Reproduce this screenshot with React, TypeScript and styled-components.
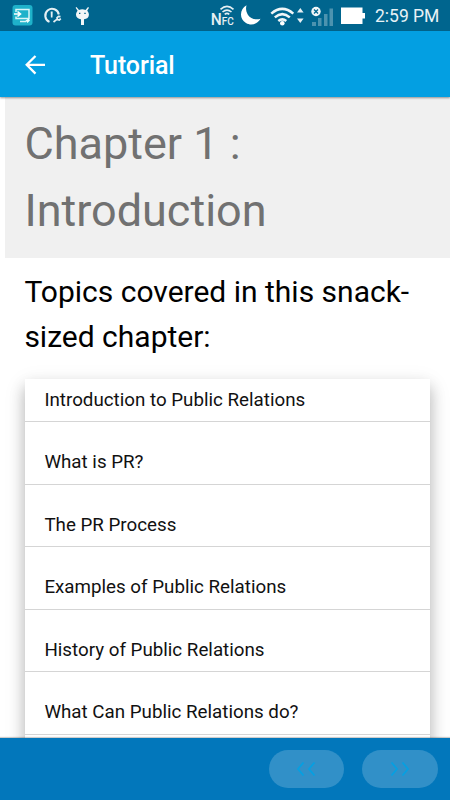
import React from 'react';
import styled, { createGlobalStyle } from 'styled-components';

const GlobalStyle = createGlobalStyle`
  *, *::before, *::after { box-sizing: border-box; }
  body { margin: 0; background: #fff; font-family: Roboto, "Liberation Sans", sans-serif; }
`;

const Screen = styled.div`
  width: 450px;
  height: 800px;
  display: flex;
  flex-direction: column;
  overflow: hidden;
  background: #fff;
`;

const StatusBar = styled.div`
  height: 31px;
  flex: none;
  display: flex;
  justify-content: space-between;
  background: #00658e;
  color: #fff;
`;

const StatusIcons = styled.svg`
  display: block;
  height: 31px;
  flex: none;
`;

const StatusRight = styled.div`
  display: flex;
  padding-right: 10px;
`;

const Clock = styled.span`
  width: 65px;
  font-size: 17.5px;
  line-height: 33px;
  white-space: nowrap;
  color: #e8f2f6;
`;

const AppBar = styled.header`
  position: relative;
  z-index: 1;
  height: 66px;
  flex: none;
  display: flex;
  align-items: center;
  padding: 3px 25px 0;
  background: #039fe2;
  color: #fff;
  box-shadow: 0 1px 2px rgba(0, 0, 0, 0.4);
`;

const BackIcon = styled.svg`
  width: 20px;
  height: 20px;
  margin: -2px 45px 0 0;
`;

const Title = styled.h1`
  margin: 0;
  font-size: 25px;
  font-weight: 500;
  line-height: 34px;
  letter-spacing: -0.1px;
`;

const Content = styled.main`
  flex: 1;
  min-height: 0;
  overflow: hidden;
`;

const ChapterHeading = styled.h2`
  height: 161px;
  margin: 0 0 0 5px;
  padding: 13px 19.4px 0;
  background: #f0f0f0;
  color: #717171;
  font-size: 45px;
  font-weight: 400;
  line-height: 67px;
`;

const Lead = styled.p`
  margin: 0;
  padding: 11px 24.4px 1px;
  font-size: 30px;
  line-height: 45px;
  color: #000;
`;

const TopicList = styled.ul`
  margin: 19px 20px 0 25px;
  padding: 0 0 20px;
  list-style: none;
  background: #fff;
  box-shadow: 0 8px 14px rgba(0, 0, 0, 0.24), 0 6px 22px rgba(0, 0, 0, 0.1);
`;

const Topic = styled.li`
  height: 62.5px;
  padding: 25.4px 19.4px 0;
  border-bottom: 1px solid #d5d5d5;
  font-size: 18.75px;
  line-height: 30px;
  color: #111;

  &:first-child {
    height: 43px;
    padding-top: 6px;
  }
`;

const Footer = styled.footer`
  position: relative;
  z-index: 1;
  height: 62px;
  flex: none;
  display: flex;
  align-items: center;
  justify-content: flex-end;
  gap: 18px;
  padding-right: 12.5px;
  background: #0277bb;
  box-shadow: 0 -1px 1px rgba(0, 0, 0, 0.2);
`;

const PageButton = styled.button`
  width: 75.5px;
  height: 38px;
  padding: 0;
  border: 0;
  border-radius: 19px;
  background: #3190c8;
  display: flex;
  align-items: center;
  justify-content: center;
`;

const Chevrons = styled.svg<{ $flip?: boolean }>`
  width: 20px;
  height: 16px;
  transform: ${({ $flip }) => ($flip ? 'scaleX(-1)' : 'none')};
`;

const topics = [
  'Introduction to Public Relations',
  'What is PR?',
  'The PR Process',
  'Examples of Public Relations',
  'History of Public Relations',
  'What Can Public Relations do?',
];

const NotificationIcons = () => (
  <StatusIcons width="100" viewBox="0 0 100 31">
    <rect x="12.5" y="5" width="20" height="20.5" rx="3" fill="#1fb2ca" />
    <path d="M16 12V9.500h13v9H16v-2M20 21.500h6" fill="none" stroke="#d9f5f8" strokeWidth="1.500" />
    <path d="M14 14h6M17.500 11.500l3 2.500-3 2.500" fill="none" stroke="#fff" strokeWidth="1.600" />
    <path d="M25.500 20.500l3-2 1.500 2-2.500 2.500z" fill="#e9ffff" />
    <path d="M49.500 21.900A6.800 6.800 0 1 1 58.800 14.500" fill="none" stroke="#e5eff3" strokeWidth="2.100" />
    <path d="M50.700 11.500h2l-.2 6h-1.600z" fill="#e5eff3" />
    <path d="M53.500 22l4-3.200M60.500 16.600l-2-.3-1.500 1.500.5 1.800 1.800.4 1.500-1.300" fill="none" stroke="#e5eff3" strokeWidth="1.700" />
    <path d="M76.500 7l2.500 3q3.300-1.300 6.500 0l2.500-3 1 .7-1.800 3c1.200 1.200 1.700 2.600 1.700 4 0 2.500-2 4.300-4.900 4.600V25h-3v-5.700c-3-.4-5-2.100-5-4.600 0-1.400.5-2.800 1.600-4l-2-3z" fill="#f2f6f7" />
    <path d="M79 13.300h1.400M84.300 13.300h1.400" stroke="#00658e" strokeWidth="1.300" />
  </StatusIcons>
);

const NfcLabel = styled.text`
  font: 500 16px Roboto, sans-serif;
  fill: #e5eff3;
`;

const NfcSmall = styled(NfcLabel)`
  font-size: 11.5px;
`;

const SystemIcons = () => (
  <StatusIcons width="165" viewBox="210 0 165 31">
    <NfcLabel x="210.700" y="24.800" textLength="11" lengthAdjust="spacingAndGlyphs">N</NfcLabel>
    <NfcSmall x="221.700" y="24.800" textLength="12" lengthAdjust="spacingAndGlyphs">FC</NfcSmall>
    <g fill="none" stroke="#e5eff3" strokeWidth="1.600">
      <path d="M220.500 9.300q6.500-5.800 13 0M222.500 12q4.500-3.900 9 0M224.700 14.300q2.300-2 4.600 0" />
    </g>
    <path d="M246.500 5.300c-7 4-7.500 13.500-.5 17.700 5.500 3.300 12 .7 14.500-4.300-5 1.500-10-.2-12.500-3.800-2-3-2.400-6.300-1.500-9.600z" fill="#fff" />
    <g fill="none" stroke="#f1f6f8" strokeWidth="2.500">
      <path d="M271.300 13.600q11-9.500 22 0M274.800 17.400q7.500-6.500 15 0M278.300 21q4-3.300 8 0" />
    </g>
    <circle cx="282.300" cy="23.300" r="2.300" fill="#fff" />
    <path d="M297 12.500l3.300-4.500 3.300 4.500zM297 18.500l3.300 4.500 3.300-4.500z" fill="#e5eff3" />
    <circle cx="316" cy="11.500" r="4.700" fill="#f1f6f8" />
    <path d="M314 9.500l4 4M318 9.500l-4 4" stroke="#00658e" strokeWidth="1.300" />
    <path d="M312 22h4v4h-4zM318 18h3.500v8H318zM324 14h3.500v12H324zM329.500 8.500h3.500V26h-3.500z" fill="#4c93af" />
    <path d="M341 7.500h21.500V13h2.500v5.500h-2.500V24H341z" fill="#fff" />
  </StatusIcons>
);

const DoubleChevron = ({ flip }: { flip?: boolean }) => (
  <Chevrons $flip={flip} viewBox="0 0 20 16">
    <path d="M7.500 1.500L2 8l5.500 6.500M18.500 1.500L13 8l5.500 6.500" fill="none" stroke="#05a0e2" strokeWidth="1.800" />
  </Chevrons>
);

export default function App() {
  return (
    <>
      <GlobalStyle />
      <Screen>
        <StatusBar>
          <NotificationIcons />
          <StatusRight>
            <SystemIcons />
            <Clock>2:59 PM</Clock>
          </StatusRight>
        </StatusBar>
        <AppBar>
          <BackIcon viewBox="0 0 20 20" aria-label="Back">
            <path d="M20 9.800H2.500M10.500 1L1.700 9.800l8.800 8.800" fill="none" stroke="#fff" strokeWidth="2.300" />
          </BackIcon>
          <Title>Tutorial</Title>
        </AppBar>
        <Content>
          <ChapterHeading>
            Chapter 1 :<br />
            Introduction
          </ChapterHeading>
          <Lead>
            Topics covered in this snack-
            <br />
            sized chapter:
          </Lead>
          <TopicList>
            {topics.map((topic) => (
              <Topic key={topic}>{topic}</Topic>
            ))}
          </TopicList>
        </Content>
        <Footer>
          <PageButton aria-label="Previous">
            <DoubleChevron />
          </PageButton>
          <PageButton aria-label="Next">
            <DoubleChevron flip />
          </PageButton>
        </Footer>
      </Screen>
    </>
  );
}
